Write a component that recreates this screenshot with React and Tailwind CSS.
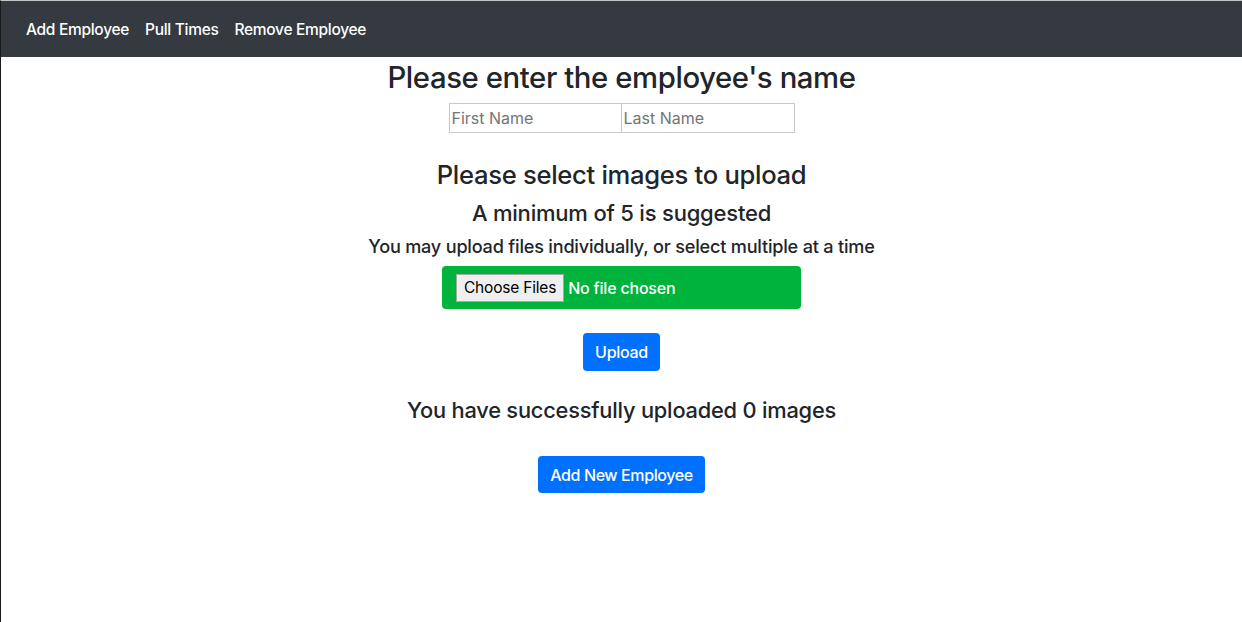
import React, { useState } from 'react';

const font = { fontFamily: 'Inter, "Liberation Sans", sans-serif' };

export default function App() {
    const [first, setFirst] = useState('');
    const [last, setLast] = useState('');
    const count = 0;

    return (
        <div className="min-h-[622px] bg-white text-[#212529] border-t border-t-[#c4c4c4] border-l border-l-[#1a1a1a]" style={font}>
            {/* Top nav */}
            <nav className="h-[56px] bg-[#343a40] flex items-center px-[25px] pt-[2px] gap-[16px] text-white text-[15.5px] font-medium tracking-[-0.3px]">
                <a href="#" className="hover:text-gray-300">Add Employee</a>
                <a href="#" className="hover:text-gray-300">Pull Times</a>
                <a href="#" className="hover:text-gray-300">Remove Employee</a>
            </nav>

            <main className="flex flex-col items-center">
                <h2 className="mt-[2px] text-[29.3px] leading-[38px] font-medium tracking-[-0.4px]">Please enter the employee's name</h2>

                <div className="mt-[6px] flex">
                    <input
                        value={first}
                        onChange={e => setFirst(e.target.value)}
                        placeholder="First Name"
                        className="w-[173px] h-[30px] border border-[#c8c8c8] px-[2px] text-[16px] placeholder:text-[#757575] outline-none"
                    />
                    <input
                        value={last}
                        onChange={e => setLast(e.target.value)}
                        placeholder="Last Name"
                        className="w-[173px] h-[30px] border border-[#c8c8c8] border-l-0 px-[2px] text-[16px] placeholder:text-[#757575] outline-none"
                    />
                </div>

                <h3 className="mt-[25px] text-[25.6px] leading-[34px] font-medium tracking-[-0.3px]">Please select images to upload</h3>
                <h4 className="mt-[7px] text-[22px] leading-[29px] font-medium tracking-[-0.2px]">A minimum of 5 is suggested</h4>
                <h5 className="mt-[6px] text-[18.1px] leading-[24px] font-medium tracking-[-0.2px]">You may upload files individually, or select multiple at a time</h5>

                {/* File picker */}
                <div className="mt-[8px] w-[359px] h-[43px] bg-[#00b33c] rounded-[4px] flex items-center pl-[14px] gap-[4px]">
                    <button className="h-[28px] px-[7px] bg-[#efefef] border border-[#a8a8a8] text-[15.5px] text-black tracking-[-0.2px]">Choose Files</button>
                    <span className="text-white text-[16px] font-medium tracking-[-0.2px]">No file chosen</span>
                </div>

                <button className="mt-[24px] h-[38px] px-[12px] bg-[#0070ff] text-white text-[16px] font-medium tracking-[-0.3px] rounded-[4px]">Upload</button>

                <h4 className="mt-[25px] text-[21.8px] leading-[29px] font-medium tracking-[-0.2px]">You have successfully uploaded {count} images</h4>

                <button className="mt-[31px] h-[37px] px-[12px] bg-[#0070ff] text-white text-[16px] font-medium tracking-[-0.4px] rounded-[4px]">Add New Employee</button>
            </main>
        </div>
    );
}
